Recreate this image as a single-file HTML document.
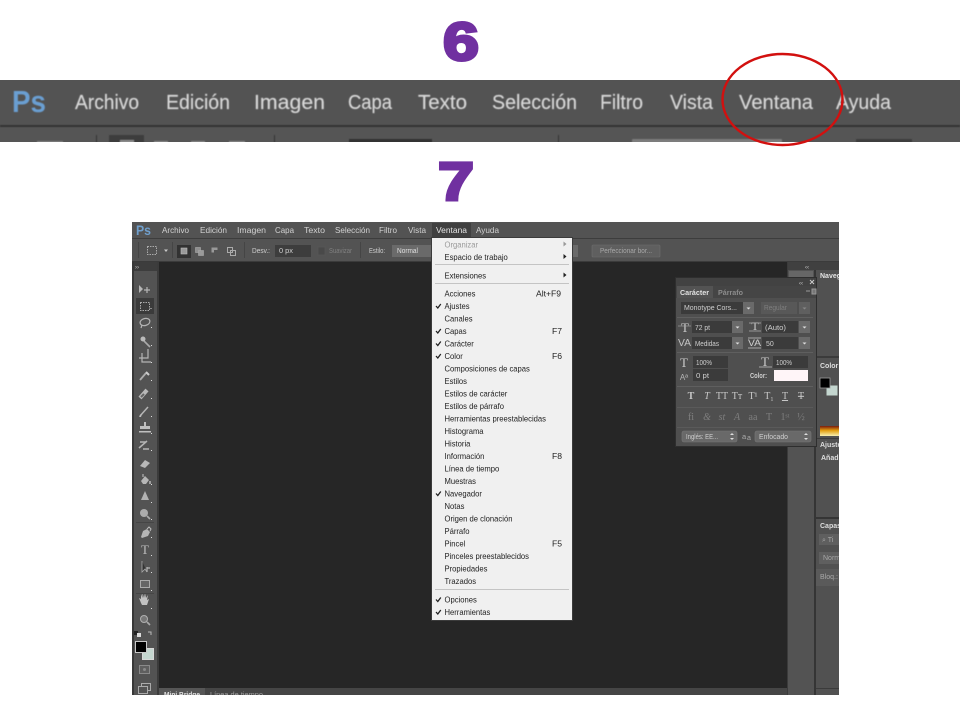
<!DOCTYPE html>
<html lang="es"><head><meta charset="utf-8"><title>Photoshop Ventana</title>
<style>
html,body{margin:0;padding:0;background:#fff;width:960px;height:720px;overflow:hidden}
svg{display:block;font-family:"Liberation Sans",sans-serif}
.big{font-size:20px;fill:#d8d8d8;stroke:#d8d8d8;stroke-width:.15}
.sm{font-size:8.6px;fill:#d2d2d2}
.m{font-size:8.6px;fill:#222}
.p{font-size:7px;fill:#cfcfcf}
.ic{fill:none;stroke:#b4b4b4;stroke-width:1.2}
.d{fill:#3a3a3a}
.b{fill:#6b6b6b}
.t{font-family:"Liberation Serif",serif;font-size:10px;fill:#c8c8c8;text-anchor:middle}
.t2{font-family:"Liberation Serif",serif;font-size:10px;fill:#7e7e7e;text-anchor:middle}
</style></head><body>
<svg width="960" height="720" viewBox="0 0 960 720" xmlns="http://www.w3.org/2000/svg">
<defs>
<clipPath id="app"><rect x="132" y="222" width="707" height="473"/></clipPath>
<clipPath id="bar"><rect x="0" y="80" width="960" height="62"/></clipPath>
<filter id="s" x="0" y="0" width="100%" height="100%"><feGaussianBlur stdDeviation=".35"/></filter>
<filter id="s2" x="0" y="0" width="100%" height="100%"><feGaussianBlur stdDeviation=".4"/></filter>
<linearGradient id="g" x1="0" y1="0" x2="0" y2="1"><stop offset="0" stop-color="#7a1a10"/><stop offset=".45" stop-color="#e3a010"/><stop offset="1" stop-color="#f7f0b0"/></linearGradient>
</defs>
<rect width="960" height="720" fill="#fff"/>
<!-- numerals -->
<text x="443" y="60" font-size="54" font-weight="700" fill="#7030a0" stroke="#7030a0" stroke-width="3" textLength="36" lengthAdjust="spacingAndGlyphs">6</text>
<text x="438" y="200" font-size="54" font-weight="700" fill="#7030a0" stroke="#7030a0" stroke-width="3" textLength="36" lengthAdjust="spacingAndGlyphs">7</text>

<!-- enlarged bar -->
<rect x="0" y="80" width="960" height="62" fill="#535353"/>
<rect x="0" y="127" width="960" height="15" fill="#555"/>
<g clip-path="url(#bar)"><g filter="url(#s2)">
<rect x="-4" y="76" width="968" height="70" fill="none"/>
<rect x="0" y="125" width="960" height="2" fill="#353535"/>
<text x="12" y="112" font-size="31" font-weight="700" fill="#6a9fd2" textLength="34" lengthAdjust="spacingAndGlyphs">Ps</text>
<g class="big">
<text x="75" y="109" textLength="64" lengthAdjust="spacingAndGlyphs">Archivo</text>
<text x="166" y="109" textLength="64" lengthAdjust="spacingAndGlyphs">Edición</text>
<text x="254" y="109" textLength="71" lengthAdjust="spacingAndGlyphs">Imagen</text>
<text x="348" y="109" textLength="44" lengthAdjust="spacingAndGlyphs">Capa</text>
<text x="418" y="109" textLength="49" lengthAdjust="spacingAndGlyphs">Texto</text>
<text x="492" y="109" textLength="85" lengthAdjust="spacingAndGlyphs">Selección</text>
<text x="600" y="109" textLength="43" lengthAdjust="spacingAndGlyphs">Filtro</text>
<text x="670" y="109" textLength="43" lengthAdjust="spacingAndGlyphs">Vista</text>
<text x="739" y="109" textLength="74" lengthAdjust="spacingAndGlyphs">Ventana</text>
<text x="836" y="109" textLength="55" lengthAdjust="spacingAndGlyphs">Ayuda</text>
</g>
<rect x="96" y="135" width="1" height="11" fill="#333"/>
<rect x="274" y="135" width="1" height="11" fill="#333"/>
<rect x="558" y="135" width="1" height="11" fill="#333"/>
<rect x="109" y="135" width="35" height="11" fill="#3c3c3c"/>
<rect x="120" y="140" width="14" height="6" fill="#8a8a8a"/>
<rect x="154" y="141" width="14" height="5" fill="#888"/>
<rect x="191" y="141" width="14" height="5" fill="#888"/>
<rect x="229" y="141" width="16" height="5" fill="#888"/>
<rect x="37" y="141" width="26" height="5" fill="#808080"/>
<rect x="349" y="139" width="83" height="7" fill="#333"/>
<rect x="632" y="139" width="150" height="7" rx="1" fill="#7c7c7c"/>
<rect x="856" y="139" width="56" height="7" fill="#3c3c3c"/>
</g></g>

<!-- app window -->
<rect x="132" y="222" width="707" height="473" fill="#535353"/>
<g clip-path="url(#app)"><g filter="url(#s)">
<rect x="128" y="218" width="715" height="481" fill="#535353"/>
<rect x="132" y="238" width="707" height="1" fill="#3d3d3d"/>
<rect x="132" y="261" width="707" height="1" fill="#3a3a3a"/>
<text x="136" y="235" font-size="14" font-weight="700" fill="#6f9fcc" textLength="15" lengthAdjust="spacingAndGlyphs">Ps</text>
<g class="sm">
<text x="162" y="233" textLength="27" lengthAdjust="spacingAndGlyphs">Archivo</text>
<text x="200" y="233" textLength="27" lengthAdjust="spacingAndGlyphs">Edición</text>
<text x="237" y="233" textLength="29" lengthAdjust="spacingAndGlyphs">Imagen</text>
<text x="275" y="233" textLength="19" lengthAdjust="spacingAndGlyphs">Capa</text>
<text x="304" y="233" textLength="21" lengthAdjust="spacingAndGlyphs">Texto</text>
<text x="335" y="233" textLength="35" lengthAdjust="spacingAndGlyphs">Selección</text>
<text x="379" y="233" textLength="18" lengthAdjust="spacingAndGlyphs">Filtro</text>
<text x="408" y="233" textLength="18" lengthAdjust="spacingAndGlyphs">Vista</text>
<rect x="432" y="223" width="39" height="14" fill="#3f3f3f"/>
<text x="436" y="233" textLength="31" lengthAdjust="spacingAndGlyphs" fill="#e6e6e6">Ventana</text>
<text x="476" y="233" textLength="23" lengthAdjust="spacingAndGlyphs">Ayuda</text>
</g>

<!-- options bar -->
<rect x="147.500" y="246.500" width="9" height="8" fill="none" stroke="#aaa" stroke-dasharray="1.500 1"/>
<path d="M164 249.500h4l-2 2.500z" fill="#c8c8c8"/>
<rect x="138" y="242" width="1" height="16" fill="#444"/>
<rect x="172" y="242" width="1" height="16" fill="#444"/>
<rect x="177" y="245" width="14" height="13" fill="#333"/>
<rect x="181" y="248" width="6" height="6" fill="#999" stroke="#bbb" stroke-width=".6"/>
<rect x="195.500" y="247.500" width="5" height="5" fill="#8f8f8f" stroke="#aaa" stroke-width=".6"/><rect x="198.500" y="250.500" width="5" height="5" fill="#9a9a9a" stroke="#aaa" stroke-width=".6"/>
<rect x="211.500" y="247.500" width="6" height="5" fill="#999"/><rect x="214" y="250" width="5" height="5" fill="#535353"/>
<rect x="227.500" y="247.500" width="5" height="5" fill="none" stroke="#aaa"/><rect x="230.500" y="250.500" width="5" height="5" fill="none" stroke="#aaa"/>
<rect x="244" y="242" width="1" height="16" fill="#444"/>
<text x="252" y="253" class="p" textLength="18" lengthAdjust="spacingAndGlyphs">Desv.:</text>
<rect x="275" y="245" width="36" height="12" fill="#3c3c3c"/>
<text x="279" y="253" class="p" textLength="14" lengthAdjust="spacingAndGlyphs">0 px</text>
<rect x="318" y="247" width="7" height="8" fill="#4a4a4a" stroke="#5a5a5a" stroke-width=".6"/>
<text x="329" y="253" class="p" style="fill:#808080" textLength="23" lengthAdjust="spacingAndGlyphs">Suavizar</text>
<rect x="360" y="242" width="1" height="16" fill="#444"/>
<text x="369" y="253" class="p" textLength="16" lengthAdjust="spacingAndGlyphs">Estilo:</text>
<rect x="392" y="245" width="186" height="12" fill="#6a6a6a"/>
<text x="397" y="253" class="p" style="fill:#e0e0e0" textLength="21" lengthAdjust="spacingAndGlyphs">Normal</text>
<rect x="592" y="245" width="68" height="12" rx="1" fill="#5f5f5f" stroke="#6e6e6e" stroke-width=".6"/>
<text x="600" y="253" class="p" style="fill:#a8a8a8" textLength="52" lengthAdjust="spacingAndGlyphs">Perfeccionar bor...</text>

<!-- doc area -->
<rect x="159" y="262" width="629" height="437" fill="#252525"/>
<rect x="128" y="262" width="31" height="437" fill="#535353"/>
<rect x="128" y="262" width="6" height="437" fill="#383838"/>
<rect x="157" y="262" width="2" height="437" fill="#3a3a3a"/>
<rect x="134" y="262" width="23" height="9" fill="#3e3e3e"/>
<text x="135" y="269" font-size="6" fill="#ccc">››</text>

<!-- tools -->
<g>
<path d="M139 285v8l4-4z" fill="#b6b6b6"/><path class="ic" d="M147 287v6M144 290h6"/>
<rect x="136" y="298" width="18" height="16" fill="#3a3a3a"/>
<rect x="140.500" y="302.500" width="9" height="8" fill="none" stroke="#aaa" stroke-dasharray="1.500 1"/>
<ellipse cx="145" cy="322" rx="5" ry="3.500" class="ic" transform="rotate(-15 145 322)"/><path class="ic" d="M142 325l-1 3"/>
<path d="M144 341l6 6" stroke="#aaa" stroke-width="1.600"/><circle cx="143" cy="339" r="2.500" fill="#bbb"/>
<path class="ic" d="M142 353v9h9M139 358h9v-9"/>
<path d="M140 380l6-7" stroke="#adadad" stroke-width="1.800"/><path d="M146 372l3 3" stroke="#ccc" stroke-width="2"/>
<path d="M140 398l7-8" stroke="#b9b9b9" stroke-width="4"/><path d="M141 397l3-3" stroke="#666" stroke-width="2"/>
<path d="M140 416l8-9" stroke="#b4b4b4" stroke-width="1.500"/><path d="M139 417q2-4 3-3l-1 3z" fill="#bbb"/>
<path d="M144 422h2v4h4v3h-10v-3h4z" fill="#bfbfbf"/><rect x="139" y="431" width="12" height="1.500" fill="#bfbfbf"/>
<path d="M139 448l8-7M140 442h6M143 449h6" stroke="#b4b4b4" stroke-width="1.500"/>
<path d="M140 466l5-6 5 3-5 5z" fill="#b8b8b8"/>
<path d="M141 481l4-5 4 4-3 4h-3z" fill="#b6b6b6"/><path d="M150 481v3" stroke="#b6b6b6" stroke-width="1.500"/><path class="ic" d="M143 477v-3"/>
<path d="M145 491l4 9h-8z" fill="#b2b2b2"/>
<circle cx="144" cy="513" r="4" fill="#acacac"/><path d="M147 516l3 3" stroke="#aaa" stroke-width="1.600"/>
<path d="M141 537l2-6 4-2 3 3-2 4-6 2z" fill="#b6b6b6"/><path d="M147 529l2-2 2 2-1 2" stroke="#bbb" fill="none"/>
<text x="145" y="554" font-family="Liberation Serif" font-size="13" fill="#bdbdbd" text-anchor="middle">T</text>
<path d="M142 561v11l3-3 2 3" fill="#333" stroke="#aaa" stroke-width=".8"/><path class="ic" d="M147 567v5M147 568h3"/>
<rect x="140.500" y="580.500" width="9" height="7" fill="#666" stroke="#aaa"/>
<path d="M141 603l-2-5 2 1v-5l1.500 4v-5l1.500 5 1-5 1 5 2-3-1 5 2-1-2 6h-5z" fill="#c2c2c2"/>
<circle cx="144" cy="619" r="3.500" fill="#777" stroke="#b0b0b0"/><path d="M147 622l3 3" stroke="#aaa" stroke-width="1.600"/>
<g fill="#ddd">
<rect x="150.500" y="308" width="1" height="1"/><rect x="151" y="327" width="1" height="1"/><rect x="151" y="345" width="1" height="1"/><rect x="151" y="362" width="1" height="1"/><rect x="151" y="380" width="1" height="1"/><rect x="151" y="398" width="1" height="1"/><rect x="151" y="416" width="1" height="1"/><rect x="151" y="433" width="1" height="1"/><rect x="151" y="450" width="1" height="1"/><rect x="151" y="484" width="1" height="1"/><rect x="151" y="502" width="1" height="1"/><rect x="151" y="519" width="1" height="1"/><rect x="151" y="537" width="1" height="1"/><rect x="151" y="555" width="1" height="1"/><rect x="151" y="572" width="1" height="1"/><rect x="151" y="590" width="1" height="1"/><rect x="151" y="608" width="1" height="1"/>
</g>
<rect x="136" y="522" width="18" height="1" fill="#444"/>
<rect x="136" y="593" width="18" height="1" fill="#444"/>
<rect x="134" y="631" width="4" height="4" fill="#222"/><rect x="137" y="633" width="4" height="4" fill="#ddd"/>
<path d="M148 632h3v3" fill="none" stroke="#b8b8b8"/>
<rect x="142.500" y="648.500" width="11" height="11" fill="#c4d6cf" stroke="#d8d8d8"/>
<rect x="135.500" y="641.500" width="11" height="11" fill="#060606" stroke="#c8c8c8"/>
<rect x="139.500" y="665.500" width="10" height="8" fill="#5e5e5e" stroke="#8a8a8a"/><circle cx="144.500" cy="669.500" r="1.500" fill="#8a8a8a"/>
<rect x="141.500" y="683.500" width="9" height="7" fill="none" stroke="#aaa"/><rect x="138.500" y="686.500" width="9" height="7" fill="#535353" stroke="#aaa"/>
</g>

<!-- bottom tabs -->
<rect x="159" y="688" width="629" height="11" fill="#454545"/>
<rect x="159" y="688" width="46" height="11" fill="#565656"/>
<text x="164" y="697" font-size="7.500" font-weight="700" fill="#e0e0e0" textLength="36" lengthAdjust="spacingAndGlyphs">Mini Bridge</text>
<text x="210" y="697" font-size="7.500" fill="#a0a0a0" textLength="53" lengthAdjust="spacingAndGlyphs">Línea de tiempo</text>

<!-- right strip + docks -->
<rect x="788" y="262" width="27" height="437" fill="#525252"/>
<rect x="787" y="262" width="1" height="437" fill="#3a3a3a"/>
<rect x="814" y="262" width="2" height="437" fill="#363636"/>
<rect x="788" y="262" width="55" height="8" fill="#3f3f3f"/>
<text x="805" y="269" font-size="6" fill="#ccc">‹‹</text>
<rect x="789" y="271" width="24" height="6" fill="#666"/>
<rect x="816" y="270" width="27" height="429" fill="#515151"/>
<text x="820" y="278" font-size="7" font-weight="700" fill="#e4e4e4">Navegador</text>
<rect x="816" y="356" width="27" height="2" fill="#3b3b3b"/>
<text x="820" y="368" font-size="7" font-weight="700" fill="#dedede">Color</text>
<rect x="826.500" y="385.500" width="11" height="10" fill="#c4d6cf"/>
<rect x="820" y="378" width="10" height="10" fill="#050505" stroke="#999" stroke-width=".8"/>
<rect x="820" y="426" width="23" height="10" fill="url(#g)"/>
<rect x="816" y="438" width="27" height="1" fill="#3a3a3a"/>
<text x="820" y="447" font-size="7" font-weight="700" fill="#dedede">Ajustes</text>
<text x="821" y="460" font-size="7" font-weight="700" fill="#dedede">Añadir</text>
<rect x="816" y="517" width="27" height="2" fill="#353535"/>
<text x="820" y="528" font-size="7" font-weight="700" fill="#dedede">Capas</text>
<rect x="819" y="534" width="24" height="11" fill="#5e5e5e"/><text x="822" y="542" font-size="7" fill="#a8a8a8">⌕ Ti</text>
<rect x="819" y="552" width="24" height="12" fill="#5e5e5e"/><text x="823" y="560" font-size="7" fill="#a8a8a8">Norm</text>
<rect x="816" y="569" width="27" height="17" fill="#5a5a5a"/><text x="820" y="579" font-size="7" fill="#a8a8a8">Bloq.:</text>
<rect x="816" y="688" width="27" height="1" fill="#3a3a3a"/>

<!-- character panel -->
<rect x="675.500" y="277.500" width="141" height="169" fill="#505050" stroke="#2e2e2e"/>
<rect x="676" y="278" width="140" height="8" fill="#434343"/>
<text x="799" y="285" font-size="6" fill="#ccc">‹‹</text>
<path d="M810 280l4 4M814 280l-4 4" stroke="#ccc"/>
<rect x="676" y="286" width="140" height="12" fill="#454545"/>
<rect x="677" y="286" width="36" height="12" fill="#535353"/>
<text x="680" y="295" font-size="7.500" font-weight="700" fill="#e2e2e2" textLength="29" lengthAdjust="spacingAndGlyphs">Carácter</text>
<text x="718" y="295" font-size="7.500" font-weight="700" fill="#8c8c8c" textLength="25" lengthAdjust="spacingAndGlyphs">Párrafo</text>
<path d="M806 291h4M812 289h4v5h-4z" stroke="#999" stroke-width="1" fill="#777"/>
<rect x="681" y="302" width="62" height="12" class="d"/>
<text x="684" y="310" class="p" textLength="53" lengthAdjust="spacingAndGlyphs">Monotype Cors...</text>
<rect x="743" y="302" width="11" height="12" class="b"/><path d="M746.500 307.500h4l-2 2z" fill="#ddd"/>
<rect x="761" y="302" width="36" height="12" fill="#585858"/>
<text x="764" y="310" class="p" style="fill:#7e7e7e" textLength="23" lengthAdjust="spacingAndGlyphs">Regular</text>
<rect x="799" y="302" width="11" height="12" fill="#5f5f5f"/><path d="M802.500 307.500h4l-2 2z" fill="#888"/>
<rect x="677" y="317" width="136" height="1" fill="#5e5e5e"/>
<text x="685" y="332" class="t" style="font-size:13px">T</text><path d="M678 326h13" stroke="#aaa" stroke-width=".6"/>
<rect x="692" y="321" width="40" height="12" class="d"/><text x="695" y="330" class="p" textLength="15" lengthAdjust="spacingAndGlyphs">72 pt</text>
<rect x="732" y="321" width="11" height="12" class="b"/><path d="M735.500 326.500h4l-2 2z" fill="#ddd"/>
<text x="755" y="330" class="t" style="font-size:12px">T</text><path d="M749 323h12M749 331h12" stroke="#aaa" stroke-width=".8"/>
<rect x="762" y="321" width="36" height="12" class="d"/><text x="765" y="330" class="p" style="font-size:7.500px" textLength="21" lengthAdjust="spacingAndGlyphs">(Auto)</text>
<rect x="799" y="321" width="11" height="12" class="b"/><path d="M802.500 326.500h4l-2 2z" fill="#ddd"/>
<text x="678" y="346" font-size="10" fill="#c4c4c4" textLength="13" lengthAdjust="spacingAndGlyphs">VA</text>
<rect x="692" y="337" width="40" height="12" class="d"/><text x="695" y="346" class="p" textLength="24" lengthAdjust="spacingAndGlyphs">Medidas</text>
<rect x="732" y="337" width="11" height="12" class="b"/><path d="M735.500 342.500h4l-2 2z" fill="#ddd"/>
<text x="748" y="346" font-size="9" fill="#d0d0d0" textLength="13" lengthAdjust="spacingAndGlyphs">VA</text><path d="M748 338h13M748 348h13" stroke="#c4c4c4" stroke-width=".8"/>
<rect x="762" y="337" width="36" height="12" class="d"/><text x="766" y="346" class="p">50</text>
<rect x="799" y="337" width="11" height="12" class="b"/><path d="M802.500 342.500h4l-2 2z" fill="#ddd"/>
<rect x="677" y="352" width="136" height="1" fill="#5e5e5e"/>
<text x="684" y="367" class="t" style="font-size:13px">T</text>
<rect x="693" y="356" width="35" height="12" class="d"/><text x="696" y="365" class="p" textLength="16" lengthAdjust="spacingAndGlyphs">100%</text>
<text x="684" y="380" font-size="8" fill="#b4b4b4" text-anchor="middle">Aª</text>
<rect x="693" y="369" width="35" height="12" class="d"/><text x="696" y="378" class="p" textLength="13" lengthAdjust="spacingAndGlyphs">0 pt</text>
<text x="765" y="366" class="t" style="font-size:13px">T</text><path d="M759 367h13" stroke="#bbb" stroke-width=".8"/>
<rect x="773" y="356" width="35" height="12" class="d"/><text x="776" y="365" class="p" textLength="16" lengthAdjust="spacingAndGlyphs">100%</text>
<text x="750" y="378" class="p" style="font-weight:700" textLength="17" lengthAdjust="spacingAndGlyphs">Color:</text>
<rect x="774" y="370" width="34" height="11" fill="#fff5f8"/>
<rect x="677" y="386" width="136" height="1" fill="#5e5e5e"/>
<text x="691" y="399" class="t" style="font-weight:700">T</text>
<text x="707" y="399" class="t" style="font-style:italic">T</text>
<text x="722" y="399" class="t">TT</text>
<text x="737" y="399" class="t">Tт</text>
<text x="753" y="399" class="t">T¹</text>
<text x="769" y="399" class="t">T₁</text>
<text x="785" y="399" class="t" text-decoration="underline">T</text>
<text x="801" y="399" class="t" text-decoration="line-through">T</text>
<rect x="677" y="407" width="136" height="1" fill="#5a5a5a"/>
<text x="691" y="420" class="t2">fi</text>
<text x="707" y="420" class="t2" style="font-style:italic">&amp;</text>
<text x="722" y="420" class="t2" style="font-style:italic">st</text>
<text x="737" y="420" class="t2" style="font-style:italic">A</text>
<text x="753" y="420" class="t2">aa</text>
<text x="769" y="420" class="t2">T</text>
<text x="785" y="420" class="t2">1ˢᵗ</text>
<text x="801" y="420" class="t2">½</text>
<rect x="677" y="427" width="136" height="1" fill="#5a5a5a"/>
<rect x="682" y="431" width="55" height="11" rx="2" fill="#696969" stroke="#777" stroke-width=".6"/>
<text x="686" y="439" class="p" textLength="32" lengthAdjust="spacingAndGlyphs">Inglés: EE...</text>
<path d="M730 435l2-2 2 2zM730 438l2 2 2-2z" fill="#ddd"/>
<text x="742" y="439" font-size="7.500" fill="#aaa">a</text><text x="747" y="440" font-size="7" fill="#aaa">a</text>
<rect x="755" y="431" width="56" height="11" rx="2" fill="#696969" stroke="#777" stroke-width=".6"/>
<text x="759" y="439" class="p" textLength="29" lengthAdjust="spacingAndGlyphs">Enfocado</text>
<path d="M804 435l2-2 2 2zM804 438l2 2 2-2z" fill="#ddd"/>

<!-- menu -->
<rect x="431.500" y="237.500" width="141" height="383" fill="#f0f0f0" stroke="#3a3a3a"/>
<g fill="#c4c4c4">
<rect x="435" y="264" width="134" height="1"/>
<rect x="435" y="283" width="134" height="1"/>
<rect x="435" y="589" width="134" height="1"/>
</g>
<g class="m" transform="translate(444.500 0) scale(.89 1)">
<text x="0" y="247.500" style="fill:#9a9a9a">Organizar</text>
<text x="0" y="260">Espacio de trabajo</text>
<text x="0" y="278.500">Extensiones</text>
<text x="0" y="296.500">Acciones</text>
<text x="0" y="309">Ajustes</text>
<text x="0" y="321.500">Canales</text>
<text x="0" y="334">Capas</text>
<text x="0" y="346.500">Carácter</text>
<text x="0" y="359">Color</text>
<text x="0" y="371.500">Composiciones de capas</text>
<text x="0" y="384">Estilos</text>
<text x="0" y="396.500">Estilos de carácter</text>
<text x="0" y="409">Estilos de párrafo</text>
<text x="0" y="421.500">Herramientas preestablecidas</text>
<text x="0" y="434">Histograma</text>
<text x="0" y="446.500">Historia</text>
<text x="0" y="459">Información</text>
<text x="0" y="471.500">Línea de tiempo</text>
<text x="0" y="484">Muestras</text>
<text x="0" y="496.500">Navegador</text>
<text x="0" y="509">Notas</text>
<text x="0" y="521.500">Origen de clonación</text>
<text x="0" y="534">Párrafo</text>
<text x="0" y="546.500">Pincel</text>
<text x="0" y="559">Pinceles preestablecidos</text>
<text x="0" y="571.500">Propiedades</text>
<text x="0" y="584">Trazados</text>
<text x="0" y="602.500">Opciones</text>
<text x="0" y="615">Herramientas</text>
</g>
<g class="m">
<text x="536" y="296.500">Alt+F9</text>
<text x="552" y="334">F7</text>
<text x="552" y="359">F6</text>
<text x="552" y="459">F8</text>
<text x="552" y="546.500">F5</text>
</g>
<g fill="#999"><path d="M563.500 241.500l3 2.500-3 2.500z"/></g>
<g fill="#222"><path d="M563.500 254l3 2.500-3 2.500z"/><path d="M563.500 272.500l3 2.500-3 2.500z"/></g>
<g fill="none" stroke="#222" stroke-width="1.300">
<path d="M436 306l1.800 2 3-4"/>
<path d="M436 331l1.800 2 3-4"/>
<path d="M436 343.500l1.800 2 3-4"/>
<path d="M436 356l1.800 2 3-4"/>
<path d="M436 493.500l1.800 2 3-4"/>
<path d="M436 599.500l1.800 2 3-4"/>
<path d="M436 612l1.800 2 3-4"/>
</g>
</g></g>

<!-- red ellipse -->
<ellipse cx="782.500" cy="99.500" rx="60" ry="45.500" fill="none" stroke="#d2100f" stroke-width="2.400"/>
</svg>
</body></html>
